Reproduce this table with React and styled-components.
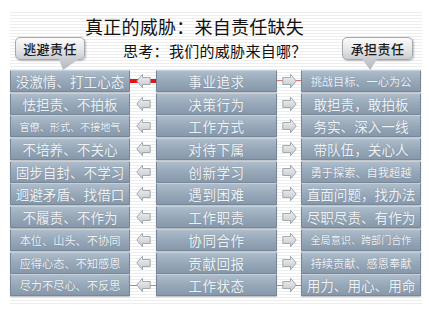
import React from "react";
import styled, { createGlobalStyle, css } from "styled-components";

const Global = createGlobalStyle`
  html, body { margin: 0; padding: 0; background: #ffffff; }
  body { width: 429px; height: 315px; overflow: hidden; font-family: "Noto Sans CJK SC", "Noto Sans", sans-serif; }
`;

const Page = styled.div`
  width: 429px;
  height: 315px;
  padding: 10px 7px 10px 10px;
  box-sizing: border-box;
`;

const Sheet = styled.div`
  height: 295px;
  background: repeating-linear-gradient(to bottom, #ffffff 0px, #ffffff 2px, #ededed 2px, #ededed 3px);
  display: flex;
  flex-direction: column;
`;

const Header = styled.div`
  height: 60px;
  display: grid;
  grid-template-columns: 70px 1fr 71px;
  padding: 0 9px 0 5px;
  box-sizing: border-box;
`;

const Titles = styled.div`
  display: flex;
  flex-direction: column;
  padding-top: 5px;
`;

const Title = styled.div`
  font-size: 18px;
  line-height: 22px;
  letter-spacing: 0.25px;
  color: #111;
  white-space: nowrap;
`;

const Subtitle = styled.div`
  margin-top: 5px;
  padding-left: 38px;
  font-size: 15px;
  line-height: 18px;
  letter-spacing: 0.3px;
  color: #111;
  white-space: nowrap;
`;

const Bubble = styled.div`
  position: relative;
  align-self: end;
  margin-bottom: 10px;
  height: 23px;
  box-sizing: border-box;
  border: 1px solid #a4aab0;
  border-radius: 5px;
  background: linear-gradient(to bottom, #fbfbfc 0%, #e4e6e8 55%, #c9cdd1 100%);
  box-shadow: 1px 1px 2px rgba(0, 0, 0, 0.25);
  display: flex;
  align-items: center;
  justify-content: center;
  font-size: 13px;
  letter-spacing: 0.4px;
  color: #1a1a1a;
  font-weight: 500;
  &::after {
    content: "";
    position: absolute;
    top: 21px;
    left: ${(p) => p.$tipLeft}px;
    width: ${(p) => p.$tipWidth}px;
    height: 11px;
    background: linear-gradient(to bottom, #c9cdd1, #b4b9be);
    clip-path: ${(p) => p.$clip};
  }
`;

const Grid = styled.div`
  display: grid;
  grid-template-columns: 120px 26px 121px 24px 120px;
  grid-template-rows: repeat(10, 22px);
  row-gap: 0.7px;
`;

const Box = styled.div`
  box-sizing: border-box;
  border: 1px solid #768898;
  border-top-color: #c4d0dc;
  border-radius: 1px;
  background: linear-gradient(to bottom, #aebccb 0%, #97a8b9 50%, #8698aa 100%);
  box-shadow: 0 1px 1px rgba(60, 70, 80, 0.35);
  display: flex;
  align-items: center;
  justify-content: center;
  color: #eef2f6;
  text-shadow: 0 0 1px rgba(90, 105, 120, 0.6);
  white-space: nowrap;
  font-size: ${(p) => (p.$size === "sm" ? "11.2px" : p.$size === "xs" ? "10.1px" : "13.6px")};
  letter-spacing: ${(p) => (p.$center ? "0.5px" : "0")};
`;

const lineStyles = {
  none: css``,
  thick: css`
    background: linear-gradient(to bottom, transparent calc(50% - 2px), #e4121a calc(50% - 2px), #e4121a calc(50% + 2px), transparent calc(50% + 2px));
  `,
  thin: css`
    background: linear-gradient(to bottom, transparent calc(50% - 0.5px), #d8777d calc(50% - 0.5px), #d8777d calc(50% + 0.5px), transparent calc(50% + 0.5px));
  `,
};

const Connector = styled.div`
  display: flex;
  align-items: center;
  justify-content: center;
  ${(p) => lineStyles[p.$line || "none"]}
`;

const ArrowIcon = ({ dir }) => (
  <svg width="15" height="16" viewBox="0 0 15 16">
    <defs>
      <linearGradient id={`ag-${dir}`} x1="0" y1="0" x2="0" y2="1">
        <stop offset="0" stopColor="#f2f3f4" />
        <stop offset="1" stopColor="#c3c7cb" />
      </linearGradient>
    </defs>
    <path
      d={
        dir === "left"
          ? "M0.8 8 L6.5 1.2 L6.5 4.5 L14.2 4.5 L14.2 11.5 L6.5 11.5 L6.5 14.8 Z"
          : "M14.2 8 L8.5 1.2 L8.5 4.5 L0.8 4.5 L0.8 11.5 L8.5 11.5 L8.5 14.8 Z"
      }
      fill={`url(#ag-${dir})`}
      stroke="#9aa1a8"
      strokeWidth="0.9"
      strokeLinejoin="round"
    />
  </svg>
);

const rows = [
  { l: "没激情、打工心态", c: "事业追求", r: "挑战目标、一心为公", rs: "sm", ll: "thick", rl: "thin" },
  { l: "怯担责、不拍板", c: "决策行为", r: "敢担责，敢拍板" },
  { l: "官僚、形式、不接地气", ls: "xs", c: "工作方式", r: "务实、深入一线" },
  { l: "不培养、不关心", c: "对待下属", r: "带队伍，关心人" },
  { l: "固步自封、不学习", c: "创新学习", r: "勇于探索、自我超越", rs: "sm" },
  { l: "迥避矛盾、找借口", c: "遇到困难", r: "直面问题，找办法" },
  { l: "不履责、不作为", c: "工作职责", r: "尽职尽责、有作为" },
  { l: "本位、山头、不协同", ls: "sm", c: "协同合作", r: "全局意识、跨部门合作", rs: "xs" },
  { l: "应得心态、不知感恩", ls: "sm", c: "贡献回报", r: "持续贡献、感恩奉献", rs: "sm" },
  { l: "尽力不尽心、不反思", ls: "sm", c: "工作状态", r: "用力、用心、用命", ll: "thin", rl: "thin" },
];

export default function App() {
  return (
    <>
      <Global />
      <Page>
        <Sheet>
          <Header>
            <Bubble $tipLeft={43} $tipWidth={20} $clip="polygon(0 0, 100% 0, 20% 100%)">逃避责任</Bubble>
            <Titles>
              <Title>真正的威胁：来自责任缺失</Title>
              <Subtitle>思考：我们的威胁来自哪？</Subtitle>
            </Titles>
            <Bubble $tipLeft={19} $tipWidth={15} $clip="polygon(0 0, 100% 0, 55% 100%)">承担责任</Bubble>
          </Header>
          <Grid>
            {rows.map((row, i) => (
              <React.Fragment key={i}>
                <Box $size={row.ls}>{row.l}</Box>
                <Connector $line={row.ll}>
                  <ArrowIcon dir="left" />
                </Connector>
                <Box $center>{row.c}</Box>
                <Connector $line={row.rl}>
                  <ArrowIcon dir="right" />
                </Connector>
                <Box $size={row.rs}>{row.r}</Box>
              </React.Fragment>
            ))}
          </Grid>
        </Sheet>
      </Page>
    </>
  );
}
